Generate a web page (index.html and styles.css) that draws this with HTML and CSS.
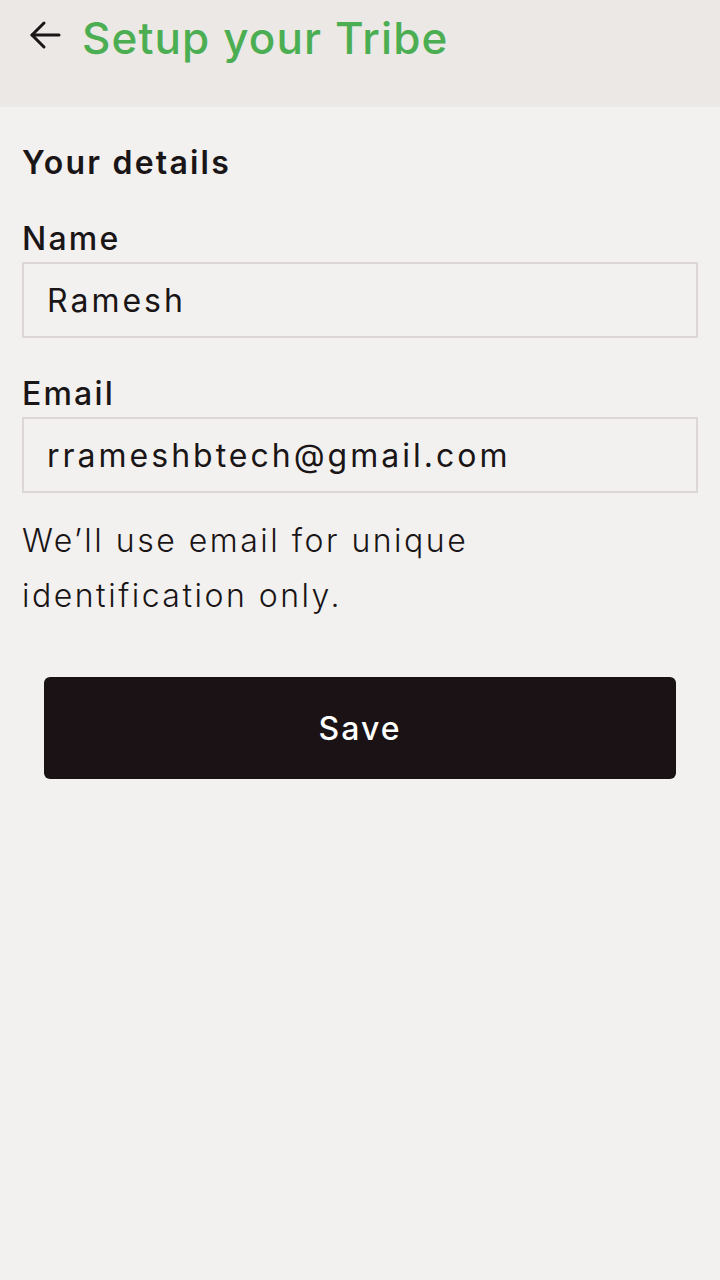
FILE: index.html
```html
<!DOCTYPE html>
<html>
<head>
<meta charset="utf-8">
<link rel="stylesheet" href="styles.css">
</head>
<body>
<div class="app">
  <header class="topbar">
    <svg class="back" width="34" height="30" viewBox="0 0 34 30" fill="none" stroke="#1a1516" stroke-width="3" stroke-linecap="round" stroke-linejoin="round">
      <path d="M31 15H4"/>
      <path d="M16 3L4 15l12 12"/>
    </svg>
    <h1 class="title">Setup your Tribe</h1>
  </header>
  <main class="content">
    <h2 class="section">Your details</h2>
    <label class="label">Name</label>
    <div class="field">Ramesh</div>
    <label class="label label-email">Email</label>
    <div class="field">rrameshbtech@gmail.com</div>
    <p class="hint">We’ll use email for unique identification only.</p>
    <button class="save">Save</button>
  </main>
</div>
</body>
</html>
```
FILE: styles.css
```css
html, body {
  margin: 0;
  padding: 0;
}
body {
  background: #f3f1ef;
  font-family: "Inter", "Liberation Sans", sans-serif;
  color: #1a1516;
}
.app {
  width: 720px;
  height: 1280px;
  display: flex;
  flex-direction: column;
}
.topbar {
  height: 107px;
  background: #ece8e5;
  display: flex;
  align-items: flex-start;
  gap: 20px;
  padding: 0 0 0 28px;
  box-sizing: border-box;
}
.back {
  margin-top: 20px;
  flex: none;
}
.title {
  margin: 8px 0 0;
  font-size: 44px;
  font-weight: 500;
  color: #4cae52;
  letter-spacing: 1.1px;
  line-height: 60px;
}
.content {
  padding: 0 22px;
  display: flex;
  flex-direction: column;
}
.section {
  margin: 36px 0 0;
  font-size: 32px;
  font-weight: 600;
  line-height: 40px;
  letter-spacing: 2.2px;
}
.label {
  margin-top: 36px;
  font-size: 32px;
  font-weight: 500;
  line-height: 40px;
  letter-spacing: 2.2px;
}
.label-email {
  margin-top: 36px;
}
.field {
  margin-top: 3px;
  height: 76px;
  box-sizing: border-box;
  border: 2px solid #dcd7d4;
  padding: 0 23px;
  display: flex;
  align-items: center;
  font-size: 32px;
  font-weight: 400;
  letter-spacing: 3px;
}
.hint {
  margin: 20px 0 0;
  font-size: 32px;
  font-weight: 300;
  line-height: 55px;
  letter-spacing: 2.5px;
  width: 540px;
}
.save {
  margin: 54px 22px 0;
  height: 102px;
  background: #1a1215;
  color: #ffffff;
  border: none;
  border-radius: 6px;
  font-family: inherit;
  font-size: 32px;
  font-weight: 500;
  letter-spacing: 2px;
}
```
